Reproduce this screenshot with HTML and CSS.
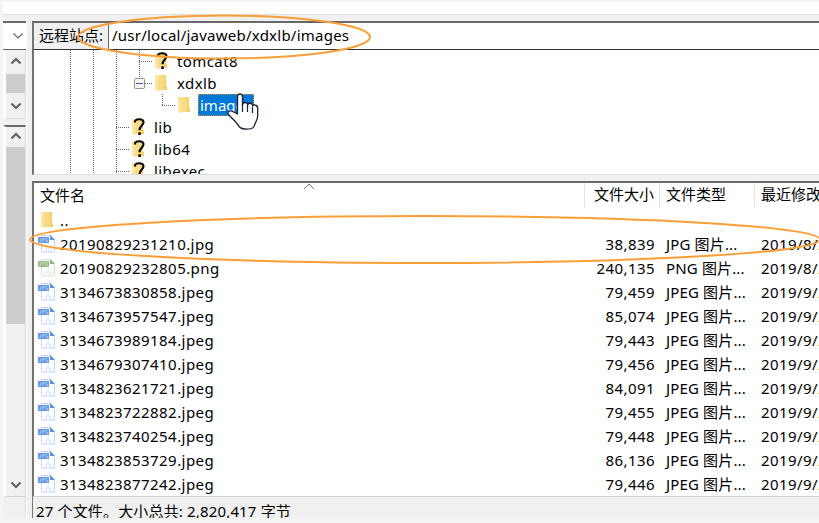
FILE: index.html
```html
<!DOCTYPE html>
<html lang="zh-CN">
<head>
<meta charset="utf-8">
<title>远程站点</title>
<link rel="stylesheet" href="styles.css">
</head>
<body>
<svg width="0" height="0" class="defs">
  <defs>
    <linearGradient id="gold"><stop offset="0" stop-color="#ffe9a6"/><stop offset="1" stop-color="#f3cf67"/></linearGradient>
    <symbol id="folder" viewBox="0 0 14 18">
      <path d="M1 1h11v11h1v4H1z" fill="url(#gold)"/><path d="M1 1l4 2v14l-4-1z" fill="#ffe7a2"/><path d="M5 3v14" stroke="#edcb70" stroke-width=".6"/>
    </symbol>
    <symbol id="question" viewBox="0 0 14 18">
      <path d="M4 4.500V3C5.500.6 12.500.5 12.500 4.300C12.500 7.800 8.500 7.800 8.500 12.200" fill="none" stroke="#000" stroke-width="2.100"/><path d="M7.300 14.300h2.500V17H7.300z"/>
    </symbol>
    <symbol id="page" viewBox="0 0 18 18">
      <path d="M3.5.5h8.8l4.2 4.2v11.300q0 1-1 1H4.500q-1 0-1-1z" fill="#fbfdff" stroke="currentColor" stroke-opacity=".38"/>
      <path d="M12 0v5h5z" fill="currentColor"/><path d="M0 2h11v6H0z" fill="currentColor" fill-opacity=".92"/>
      <path d="M6 15c0-2 1.500-2 2-2 .5-3 4-3 4.500-.4 2 0 2 1.400 2 2.400z" fill="currentColor" fill-opacity=".13"/>
      <path d="M2.500 3.500v3H1M4.500 6.500v-3H6v1.500H4.500M9.500 3.500H8v3h1.500V5" fill="none" stroke="#fff" stroke-opacity=".5" stroke-width=".7"/>
    </symbol>
    <symbol id="up" viewBox="0 0 12 8"><path d="M1.500 6.500L6 2l4.500 4.500" fill="none" stroke="#606060" stroke-width="2.100"/></symbol>
    <symbol id="down" viewBox="0 0 12 8"><path d="M1.500 1.500L6 6l4.500-4.500" fill="none" stroke="#606060" stroke-width="2.100"/></symbol>
    <symbol id="pass" viewBox="0 0 23 22"><path d="M.5 0v22" stroke="#666" stroke-dasharray="1 1"/></symbol>
    <symbol id="tee" viewBox="0 0 16 22"><path d="M.5 0v22M0 11.500h13" stroke="#666" stroke-dasharray="1 1"/></symbol>
    <symbol id="elbow" viewBox="0 0 16 22"><path d="M.5 0v11M0 11.500h13" stroke="#666" stroke-dasharray="1 1"/></symbol>
  </defs>
</svg>
<div class="window">
  <div class="strip"></div>
  <div class="panes">
    <aside class="local">
      <div class="combo"><svg width="12" height="8" viewBox="0 0 12 8"><path d="M1.500 1.500L6 6l4.500-4.500" fill="none" stroke="#666" stroke-width="1.100"/></svg></div>
      <div class="scroll short"><svg class="arrow"><use href="#up"/></svg><div class="thumb"></div><svg class="arrow"><use href="#down"/></svg></div>
      <div class="scroll long"><svg class="arrow"><use href="#up"/></svg><div class="thumb"></div><div class="track"></div><svg class="arrow"><use href="#down"/></svg></div>
      <div class="localfoot"></div>
    </aside>
    <main class="remote">
      <section class="site">
        <div class="address"><label>远程站点:</label><div class="path">/usr/local/javaweb/xdxlb/images</div></div>
        <div class="tree">
          <div class="node"><svg class="g"><use href="#pass"/></svg><svg class="g"><use href="#pass"/></svg><svg class="g"><use href="#pass"/></svg><svg class="b"><use href="#tee"/></svg><svg class="f"><use href="#folder"/><use href="#question"/></svg><span>tomcat8</span></div>
          <div class="node"><svg class="g"><use href="#pass"/></svg><svg class="g"><use href="#pass"/></svg><svg class="g"><use href="#pass"/></svg><svg class="b wide" viewBox="0 0 16 22"><path d="M.5 0v6M6 11.500h7" stroke="#666" stroke-dasharray="1 1"/><rect x="-4.500" y="6.500" width="10" height="10" rx="1" fill="#f5f5f5" stroke="#919191"/><path d="M-3 11.500h7" stroke="#4059a9"/></svg><svg class="f"><use href="#folder"/></svg><span>xdxlb</span></div>
          <div class="node"><svg class="g"><use href="#pass"/></svg><svg class="g"><use href="#pass"/></svg><svg class="g"><use href="#pass"/></svg><i class="g"></i><svg class="b"><use href="#elbow"/></svg><svg class="f"><use href="#folder"/></svg><span class="selected">images</span></div>
          <div class="node"><svg class="g"><use href="#pass"/></svg><svg class="g"><use href="#pass"/></svg><svg class="b"><use href="#tee"/></svg><svg class="f"><use href="#folder"/><use href="#question"/></svg><span>lib</span></div>
          <div class="node"><svg class="g"><use href="#pass"/></svg><svg class="g"><use href="#pass"/></svg><svg class="b"><use href="#tee"/></svg><svg class="f"><use href="#folder"/><use href="#question"/></svg><span>lib64</span></div>
          <div class="node"><svg class="g"><use href="#pass"/></svg><svg class="g"><use href="#pass"/></svg><svg class="b"><use href="#tee"/></svg><svg class="f"><use href="#folder"/><use href="#question"/></svg><span>libexec</span></div>
        </div>
      </section>
      <section class="files">
        <div class="row head"><div class="name">文件名<svg class="sort" width="12" height="7" viewBox="0 0 12 7"><path d="M1 6l5-5 5 5" fill="none" stroke="#777"/></svg></div><div class="size">文件大小</div><div class="type">文件类型</div><div class="date">最近修改</div></div>
        <div class="row"><div class="name"><svg class="f"><use href="#folder"/></svg>..</div></div>
        <div class="row"><div class="name"><svg class="p"><use href="#page"/></svg>20190829231210.jpg</div><div class="size">38,839</div><div class="type">JPG 图片...</div><div class="date">2019/8/29</div></div>
        <div class="row"><div class="name"><svg class="p png"><use href="#page"/></svg>20190829232805.png</div><div class="size">240,135</div><div class="type">PNG 图片...</div><div class="date">2019/8/29</div></div>
        <div class="row"><div class="name"><svg class="p"><use href="#page"/></svg>3134673830858.jpeg</div><div class="size">79,459</div><div class="type">JPEG 图片...</div><div class="date">2019/9/2</div></div>
        <div class="row"><div class="name"><svg class="p"><use href="#page"/></svg>3134673957547.jpeg</div><div class="size">85,074</div><div class="type">JPEG 图片...</div><div class="date">2019/9/2</div></div>
        <div class="row"><div class="name"><svg class="p"><use href="#page"/></svg>3134673989184.jpeg</div><div class="size">79,443</div><div class="type">JPEG 图片...</div><div class="date">2019/9/2</div></div>
        <div class="row"><div class="name"><svg class="p"><use href="#page"/></svg>3134679307410.jpeg</div><div class="size">79,456</div><div class="type">JPEG 图片...</div><div class="date">2019/9/2</div></div>
        <div class="row"><div class="name"><svg class="p"><use href="#page"/></svg>3134823621721.jpeg</div><div class="size">84,091</div><div class="type">JPEG 图片...</div><div class="date">2019/9/2</div></div>
        <div class="row"><div class="name"><svg class="p"><use href="#page"/></svg>3134823722882.jpeg</div><div class="size">79,455</div><div class="type">JPEG 图片...</div><div class="date">2019/9/2</div></div>
        <div class="row"><div class="name"><svg class="p"><use href="#page"/></svg>3134823740254.jpeg</div><div class="size">79,448</div><div class="type">JPEG 图片...</div><div class="date">2019/9/2</div></div>
        <div class="row"><div class="name"><svg class="p"><use href="#page"/></svg>3134823853729.jpeg</div><div class="size">86,136</div><div class="type">JPEG 图片...</div><div class="date">2019/9/2</div></div>
        <div class="row"><div class="name"><svg class="p"><use href="#page"/></svg>3134823877242.jpeg</div><div class="size">79,446</div><div class="type">JPEG 图片...</div><div class="date">2019/9/2</div></div>
      </section>
      <footer class="status">27 个文件。大小总共: 2,820,417 字节</footer>
    </main>
  </div>
</div>
<svg class="overlay" width="819" height="523" viewBox="0 0 819 523">
  <g fill="none" stroke="#fa9f38" stroke-width="2"><ellipse cx="224" cy="37" rx="146" ry="21.500"/><ellipse cx="425" cy="239.500" rx="395" ry="23.500"/></g>
  <path d="M237.500 114V97q0-3 2.500-3t2.500 3v8q0-2.500 2.700-2.500 2.500 0 2.500 2.500 .4-2 2.700-1.700 2.500.3 2.500 2.700 .5-1.500 2.500-1 2.300.5 2.300 3.500v7c0 5-2.700 7-3.700 11-2 3.500-12 3.500-15 0-2-4-7-8-10.500-12-2-3 2-5 5-2.500z" fill="#fff" stroke="#1c2432" stroke-width="1.300" stroke-linejoin="round"/>
  <path d="M242.500 104v8M247.500 105v7M252.500 107v6" stroke="#1c2432" stroke-width="1.200"/>
</svg>
</body>
</html>
```
FILE: styles.css
```css
* { box-sizing: border-box; }
body { margin: 0; position: relative; width: 819px; height: 523px; overflow: hidden; background: #f4f4f4; color: #000; font: 15px/22px "Noto Sans", "Noto Sans CJK SC", sans-serif; }
svg { display: block; flex: none; }
.defs { position: absolute; }
.overlay { position: absolute; left: 0; top: 0; pointer-events: none; }
.window { height: 518px; border: solid #f4f4f4; border-width: 2px 0 0 3px; background: #f0f0f0; overflow: hidden; }
.strip { height: 13px; background: #fff; border-bottom: 1px solid #dedede; }
.panes { display: flex; height: 503px; }
.local { width: 24px; padding-top: 6px; border-right: 1px solid #fff; flex: none; }
.combo { height: 29px; background: #fff; border-top: 2px solid #696969; border-bottom: 1px solid #666; display: flex; align-items: center; justify-content: flex-end; padding-right: 2px; }
.scroll { border-left: 3px solid #fff; display: flex; flex-direction: column; align-items: center; background: #f0f0f0; border-right: 1px solid #ddd; }
.arrow { width: 12px; height: 8px; margin: 8px 0; }
.thumb { width: 19px; background: #cdcdcd; }
.short { height: 69px; border-bottom: 1px solid #ddd; }
.short .arrow:first-child { margin-top: 7px; }
.short .thumb { height: 21px; margin-top: 1px; }
.short .arrow:last-child { margin-top: 9px; }
.long { margin-top: 6px; height: 372px; border-top: 2px solid #696969; border-bottom: 1px solid #d0d0d0; }
.long .arrow:first-child { margin: 5px 0 7px; }
.long .thumb { height: 177px; }
.track { flex: 1; }
.long .arrow:last-child { margin-bottom: 7px; }
.localfoot { height: 22px; border-right: 1px solid #ddd; }
.remote { margin-left: 5px; flex: 1; min-width: 0; padding-top: 6px; }
.site { border-top: 2px solid #696969; border-left: 2px solid #737373; height: 154px; background: #fff; border-bottom: 1px solid #ddd; overflow: hidden; }
.address { height: 27px; display: flex; border-bottom: 1px solid #333; background: #f0f0f0; line-height: 25px; }
.address label { width: 74px; padding-left: 5px; white-space: nowrap; flex: none; }
.path { flex: 1; background: #fff; border-left: 1px solid #666; padding-left: 3px; letter-spacing: .24px; }
.tree { padding: 0 0 0 36px; letter-spacing: .4px; }
.node { display: flex; height: 22px; align-items: center; }
.g { width: 23px; height: 22px; flex: none; }
.b { width: 16px; height: 22px; }
.wide { overflow: visible; }
.f { width: 14px; height: 18px; margin: 0 9px 0 -1px; }
.selected { color: #fff; background: #0078d7; border: 1px dotted #e08928; height: 22px; line-height: 20px; padding: 0 1px; width: 56px; margin-left: -2px; letter-spacing: 0; }
.files { margin-top: 6px; height: 316px; background: #fff; border-top: 2px solid #696969; border-left: 2px solid #737373; border-bottom: 1px solid #d0d0d0; overflow: hidden; }
.row { display: grid; grid-template-columns: 551px 75px 95px 100px; height: 24px; line-height: 24px; white-space: nowrap; letter-spacing: .43px; }
.head { height: 25px; line-height: 23px; letter-spacing: 0; }
.head > div { border-right: 1px solid #e2e2e2; }
.name { display: flex; align-items: center; padding-left: 4px; }
.head .name { padding-left: 6px; }
.name .f { margin: 0 6px 0 2px; }
.sort { align-self: flex-start; margin-left: 218px; }
.p { width: 18px; height: 18px; margin-right: 4px; color: #5b91df; }
.png { color: #91b878; }
.size { text-align: right; padding-right: 5px; }
.type, .date { padding-left: 6px; }
.row .type { letter-spacing: .15px; }
.head .type { letter-spacing: 0; }
.status { height: 22px; padding: 3px 0 0 3px; border-left: 1px solid #777; letter-spacing: .16px; }
```
